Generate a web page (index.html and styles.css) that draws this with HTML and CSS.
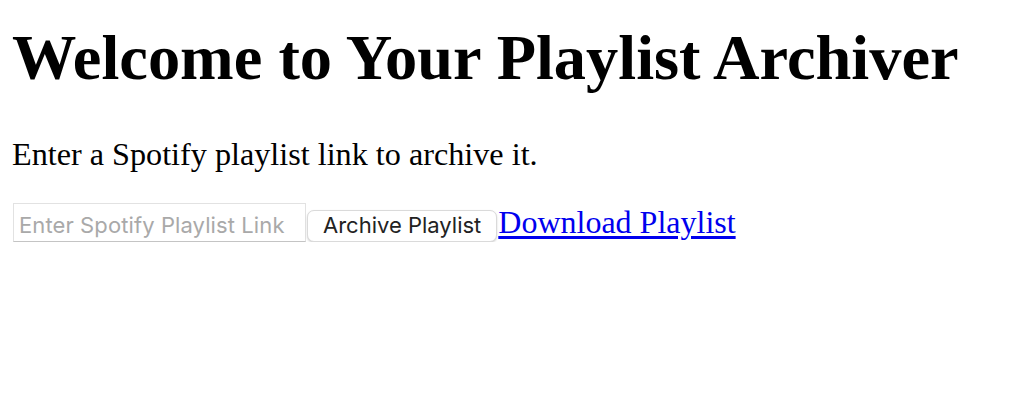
FILE: index.html
```html
<!DOCTYPE html>
<html lang="en">
<head>
<meta charset="utf-8">
<title>Playlist Archiver</title>
<link rel="stylesheet" href="styles.css">
</head>
<body>
<h1 class="title">Welcome to Your Playlist Archiver</h1>
<p class="intro">Enter a Spotify playlist link to archive it.</p>
<div class="row">
<input class="link-input" type="text" placeholder="Enter Spotify Playlist Link"><button class="archive-btn" type="button">Archive Playlist</button><a class="download" href="#">Download Playlist</a>
</div>
</body>
</html>
```

FILE: styles.css
```css
html, body {
  background: #ffffff;
}
body {
  margin: 0;
  padding: 0 12px;
  font-family: "Liberation Serif", "Times New Roman", serif;
  color: #000000;
}
.title {
  margin: 22px 0 0 0;
  font-size: 64.4px;
  line-height: 72px;
  font-weight: bold;
}
.intro {
  margin: 42px 0 0 0;
  font-size: 32.2px;
  line-height: 36px;
}
.row {
  margin-top: 31px;
  display: flex;
  align-items: baseline;
  font-size: 32px;
  line-height: 36px;
}
.link-input {
  box-sizing: border-box;
  width: 293px;
  height: 39px;
  margin: 0 0 0 1px;
  padding: 4px 5px 0 5px;
  border: 1px solid #e2e2e2;
  border-bottom-color: #c4c4c4;
  border-radius: 0;
  background: #ffffff;
  font-family: Inter, "Liberation Sans", Arial, sans-serif;
  font-size: 22px;
  letter-spacing: 0.1px;
  color: #000000;
  outline: none;
}
.link-input::placeholder {
  color: #a9a9a9;
}
.archive-btn {
  box-sizing: border-box;
  height: 32px;
  margin: 0 1px 0 1px;
  padding: 0 15px 2px 15px;
  border: 1px solid #dadada;
  border-radius: 7px;
  background: #ffffff;
  box-shadow: 0 1px 2px rgba(0, 0, 0, 0.18);
  font-family: Inter, "Liberation Sans", Arial, sans-serif;
  font-size: 22px;
  color: #222222;
  cursor: pointer;
}
.download {
  color: #0000ee;
  text-decoration: underline;
  text-underline-offset: 3px;
}
```
